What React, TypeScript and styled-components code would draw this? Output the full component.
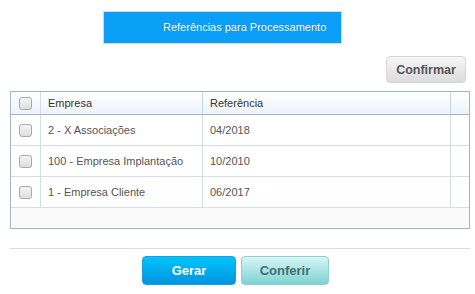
import React from 'react';
import styled, { createGlobalStyle } from 'styled-components';

const GlobalStyle = createGlobalStyle`
    body {
        margin: 0;
        background: #fff;
        font-family: 'Liberation Sans', Arial, sans-serif;
    }
`

const rows = [
    { empresa: '2 - X Associações', ref: '04/2018' },
    { empresa: '100 - Empresa Implantação', ref: '10/2010' },
    { empresa: '1 - Empresa Cliente', ref: '06/2017' },
];

function App() {
    return (
        <>
        <GlobalStyle />
        <Page>
            <TitleRow>
                <TitleBar>Referências para Processamento</TitleBar>
            </TitleRow>

            <ToolRow>
                <GrayButton>Confirmar</GrayButton>
            </ToolRow>

            <Grid>
                <HeadRow>
                    <Cell><Check /></Cell>
                    <HeadCell>Empresa</HeadCell>
                    <HeadCell>Referência</HeadCell>
                    <ScrollCell />
                </HeadRow>
                {rows.map(r => (
                    <BodyRow key={r.empresa}>
                        <Cell><Check /></Cell>
                        <TextCell>{r.empresa}</TextCell>
                        <TextCell>{r.ref}</TextCell>
                    </BodyRow>
                ))}
                <Filler />
            </Grid>

            <Divider />

            <Actions>
                <BlueButton>Gerar</BlueButton>
                <TealButton>Conferir</TealButton>
            </Actions>
        </Page>
        </>
    )
}

const Page = styled.div`
    width: 475px;
    height: 294px;
    padding: 11px 6px 0 10px;
    box-sizing: border-box;
`

const TitleRow = styled.div`
    display: flex;
    padding-left: 93px;
`

const TitleBar = styled.div`
    width: 239px;
    height: 33px;
    box-sizing: border-box;
    border: 1px solid #d8d8d8;
    background: #0aa0f8;
    color: #fff;
    font-size: 11px;
    line-height: 31px;
    padding-left: 59px;
    text-shadow: 0 0 1px rgba(0, 0, 0, 0.35);
`

const ToolRow = styled.div`
    display: flex;
    justify-content: flex-end;
    padding: 12px 3px 0 0;
    margin-bottom: 8px;
`

const GrayButton = styled.button`
    width: 80px;
    height: 27px;
    border: 1px solid #d6d6d6;
    border-radius: 4px;
    background: linear-gradient(#f6f6f6, #dcdcdc);
    color: #555;
    font-family: 'Liberation Sans', Arial, sans-serif;
    font-weight: bold;
    font-size: 12.5px;
    padding: 0;
`

const Grid = styled.div`
    width: 460px;
    height: 138px;
    box-sizing: border-box;
    border: 1px solid #a4b4c4;
    display: flex;
    flex-direction: column;
`

const rowBase = `
    display: grid;
    grid-template-columns: 30px 162px 248px 1fr;
    border-bottom: 1px solid #d4dde6;
`

const HeadRow = styled.div`
    ${rowBase}
    height: 22px;
    border-bottom-color: #a4b4c4;
    background: linear-gradient(#ffffff, #eef3fa);
`

const BodyRow = styled.div`
    ${rowBase}
    height: 31px;
    box-sizing: border-box;
    background: #fff;
`

const Cell = styled.div`
    display: flex;
    align-items: center;
    justify-content: center;
    border-right: 1px solid #d4dde6;
`

const HeadCell = styled.div`
    display: flex;
    align-items: center;
    padding-left: 7px;
    border-right: 1px solid #c6d2de;
    font-size: 11px;
    color: #333;
`

const ScrollCell = styled.div``

const TextCell = styled.div`
    display: flex;
    align-items: center;
    padding-left: 7px;
    border-right: 1px solid #d4dde6;
    font-size: 11px;
    color: #555;
`

const Check = styled.span`
    width: 11px;
    height: 11px;
    border: 1px solid #aaa;
    border-radius: 3px;
    background: linear-gradient(#f4f4f4, #dedede);
`

const Filler = styled.div`
    flex: 1;
    background: #fafafa;
`

const Divider = styled.div`
    width: 460px;
    height: 1px;
    background: #dcdcdc;
    margin: 19px 0 7px;
`

const Actions = styled.div`
    display: flex;
    gap: 5px;
    padding-left: 132px;
`

const BlueButton = styled.button`
    width: 94px;
    height: 29px;
    border: 1px solid #1a9ee0;
    border-radius: 4px;
    background: linear-gradient(#00c4fa, #0094e0);
    color: #fff;
    font-family: 'Liberation Sans', Arial, sans-serif;
    font-weight: bold;
    font-size: 13px;
    padding: 0;
`

const TealButton = styled.button`
    width: 88px;
    height: 29px;
    border: 1px solid #8fcfcf;
    border-radius: 4px;
    background: linear-gradient(#d8f6f6, #80d2d2);
    color: #3c7272;
    font-family: 'Liberation Sans', Arial, sans-serif;
    font-weight: bold;
    font-size: 13px;
    padding: 0;
`

export default App;
